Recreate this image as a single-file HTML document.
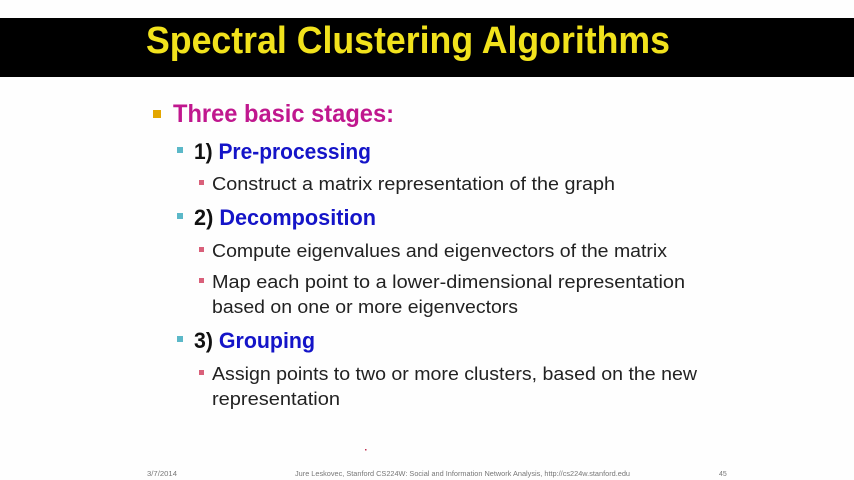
<!DOCTYPE html>
<html><head><meta charset="utf-8"><style>
html,body{margin:0;padding:0;background:#fff;}
svg{display:block;}
text{font-family:"Liberation Sans",sans-serif;}
</style></head><body>
<svg width="854" height="480" viewBox="0 0 854 480" xmlns="http://www.w3.org/2000/svg">
<rect width="854" height="480" fill="#fefefe"/>
<rect x="0" y="18" width="854" height="59" fill="#000"/>
<text x="146" y="53" font-size="38" font-weight="bold" fill="#f1e21c" textLength="524" lengthAdjust="spacingAndGlyphs">Spectral Clustering Algorithms</text>

<rect x="153" y="110" width="8" height="8" fill="#e3a600"/>
<text x="173" y="122" font-size="25" font-weight="bold" fill="#c0178e" textLength="221" lengthAdjust="spacingAndGlyphs">Three basic stages:</text>

<rect x="177" y="147" width="6" height="6" fill="#5bb8c8"/>
<text x="194" y="159" font-size="22" font-weight="bold" textLength="177" lengthAdjust="spacingAndGlyphs"><tspan fill="#111">1) </tspan><tspan fill="#1414c8">Pre-processing</tspan></text>

<rect x="199" y="180" width="5" height="5" fill="#d9607a"/>
<text x="212" y="190" font-size="18" fill="#222" textLength="403" lengthAdjust="spacingAndGlyphs">Construct a matrix representation of the graph</text>

<rect x="177" y="213" width="6" height="6" fill="#5bb8c8"/>
<text x="194" y="225" font-size="22" font-weight="bold" textLength="182" lengthAdjust="spacingAndGlyphs"><tspan fill="#111">2) </tspan><tspan fill="#1414c8">Decomposition</tspan></text>

<rect x="199" y="247" width="5" height="5" fill="#d9607a"/>
<text x="212" y="257" font-size="18" fill="#222" textLength="455" lengthAdjust="spacingAndGlyphs">Compute eigenvalues and eigenvectors of the matrix</text>

<rect x="199" y="278" width="5" height="5" fill="#d9607a"/>
<text x="212" y="288" font-size="18" fill="#222" textLength="473" lengthAdjust="spacingAndGlyphs">Map each point to a lower-dimensional representation</text>
<text x="212" y="313" font-size="18" fill="#222" textLength="306" lengthAdjust="spacingAndGlyphs">based on one or more eigenvectors</text>

<rect x="177" y="336" width="6" height="6" fill="#5bb8c8"/>
<text x="194" y="348" font-size="22" font-weight="bold" textLength="121" lengthAdjust="spacingAndGlyphs"><tspan fill="#111">3) </tspan><tspan fill="#1414c8">Grouping</tspan></text>

<rect x="199" y="370" width="5" height="5" fill="#d9607a"/>
<text x="212" y="380" font-size="18" fill="#222" textLength="485" lengthAdjust="spacingAndGlyphs">Assign points to two or more clusters, based on the new</text>
<text x="212" y="405" font-size="18" fill="#222" textLength="128" lengthAdjust="spacingAndGlyphs">representation</text>

<rect x="365" y="449" width="1.5" height="1.5" fill="#c03050"/>
<text x="147" y="476" font-size="7" fill="#777" textLength="30" lengthAdjust="spacingAndGlyphs">3/7/2014</text>
<text x="295" y="476" font-size="7" fill="#777" textLength="335" lengthAdjust="spacingAndGlyphs">Jure Leskovec, Stanford CS224W: Social and Information Network Analysis, http://cs224w.stanford.edu</text>
<text x="719" y="476" font-size="7" fill="#777">45</text>
</svg>
</body></html>
